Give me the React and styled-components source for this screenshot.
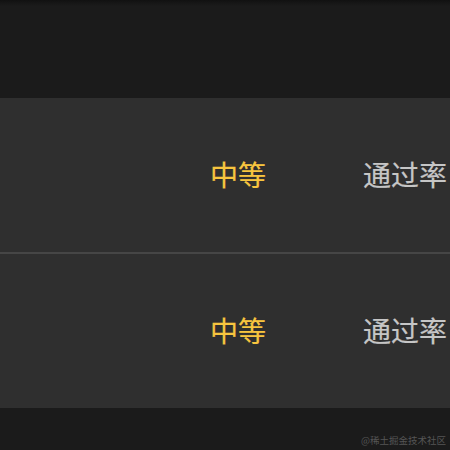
import React from 'react';
import styled, { createGlobalStyle } from 'styled-components';

const GlobalStyle = createGlobalStyle`
  html, body {
    margin: 0;
    padding: 0;
    background: #1b1b1b;
  }
  body {
    font-family: "Noto Sans CJK SC", "Noto Sans", sans-serif;
  }
`;

const Page = styled.div`
  width: 450px;
  height: 450px;
  overflow: hidden;
  display: flex;
  flex-direction: column;
  background: linear-gradient(#111111 0px, #1b1b1b 6px);
`;

const Header = styled.div`
  height: 98px;
  flex-shrink: 0;
`;

const List = styled.div`
  display: flex;
  flex-direction: column;
  background: #2f2f2f;
`;

const Row = styled.div`
  height: 152px;
  padding: 0 0 2px 210px;
  display: flex;
  align-items: center;
  border-top: ${(p) => (p.divided ? '2px solid #464646' : 'none')};
  white-space: nowrap;
`;

const Cell = styled.span`
  font-size: 28px;
  font-weight: 400;
  line-height: 1;
  color: ${(p) => p.color};
  width: ${(p) => p.width || 'auto'};
  flex-shrink: 0;
  -webkit-text-stroke: 0.2px ${(p) => p.color};
`;

const Footer = styled.div`
  flex: 1;
  display: flex;
  align-items: flex-end;
  justify-content: flex-end;
  padding: 0 4px 5px 0;
`;

const Watermark = styled.span`
  font-size: 9.5px;
  color: #555555;
  line-height: 1;
`;

const rows = [
  { level: '中等', rate: '通过率' },
  { level: '中等', rate: '通过率' },
];

export default function App() {
  return (
    <>
      <GlobalStyle />
      <Page>
        <Header />
        <List>
          {rows.map((r, i) => (
            <Row key={i} divided={i > 0}>
              <Cell color="#f7c53f" width="153px">{r.level}</Cell>
              <Cell color="#c6c6c6">{r.rate}</Cell>
            </Row>
          ))}
        </List>
        <Footer>
          <Watermark>@稀土掘金技术社区</Watermark>
        </Footer>
      </Page>
    </>
  );
}
